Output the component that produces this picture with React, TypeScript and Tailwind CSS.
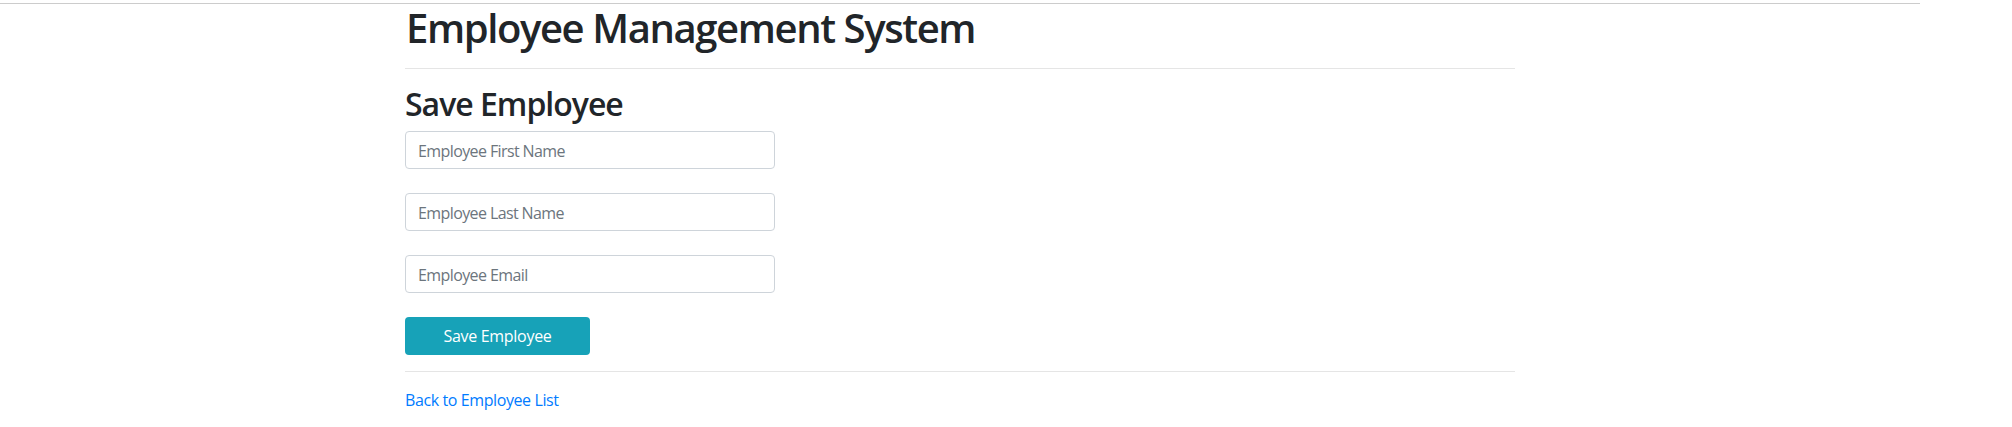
import React from "react";

export default function App() {
  const font = { fontFamily: '"Open Sans", "Noto Sans", sans-serif' };
  return (
    <div className="w-[2012px] h-[427px] bg-white overflow-hidden text-[#212529]" style={font}>
      <div className="mt-[3px] h-px w-[1920px] bg-[#cccccc]" />
      <div className="ml-[405px] w-[1110px] flex flex-col">
        <h1 className="text-[40px] leading-[48px] font-semibold tracking-[-1.4px] pl-[1px]">
          Employee Management System
        </h1>
        <div className="mt-[16px] h-px bg-[#e5e5e5]" />
        <h2 className="mt-[16px] text-[32px] leading-[38px] font-semibold tracking-[-1px]">Save Employee</h2>
        <form className="mt-[8px] flex flex-col gap-[24px] w-[370px]">
          <input
            className="h-[38px] w-full rounded-[4px] border border-[#ced4da] px-[12px] pt-[2px] text-[16px] text-[#495057] placeholder:text-[#6c757d] outline-none tracking-[-0.6px]"
            placeholder="Employee First Name"
          />
          <input
            className="h-[38px] w-full rounded-[4px] border border-[#ced4da] px-[12px] pt-[2px] text-[16px] text-[#495057] placeholder:text-[#6c757d] outline-none tracking-[-0.6px]"
            placeholder="Employee Last Name"
          />
          <input
            className="h-[38px] w-full rounded-[4px] border border-[#ced4da] px-[12px] pt-[2px] text-[16px] text-[#495057] placeholder:text-[#6c757d] outline-none tracking-[-0.6px]"
            placeholder="Employee Email"
          />
          <button
            type="button"
            className="h-[38px] w-[185px] rounded-[4px] bg-[#17a2b8] text-white text-[16px] tracking-[-0.3px]"
          >
            Save Employee
          </button>
        </form>
        <div className="mt-[16px] h-px bg-[#e5e5e5]" />
        <a href="#" className="mt-[16px] text-[16px] leading-[24px] text-[#007bff] w-fit tracking-[-0.4px]">
          Back to Employee List
        </a>
      </div>
    </div>
  );
}
